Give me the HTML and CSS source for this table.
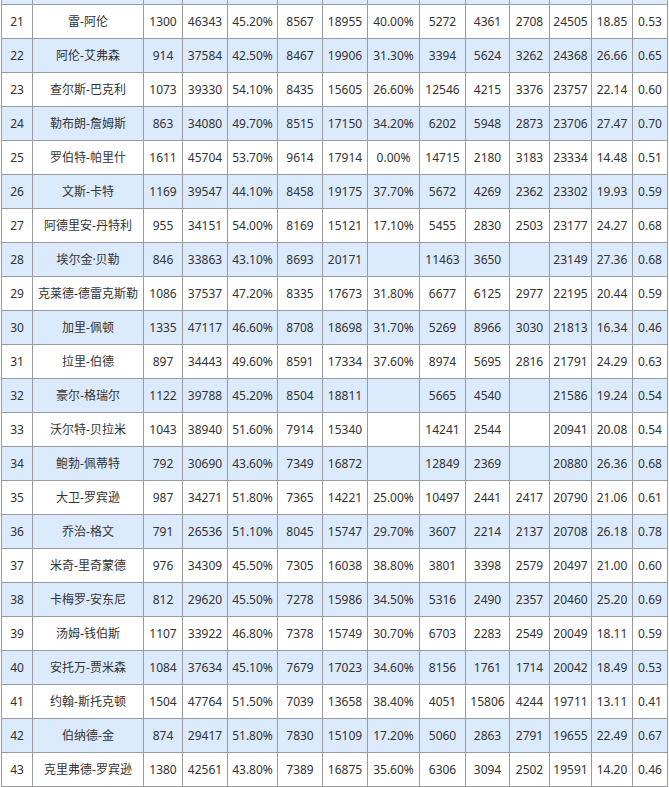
FILE: index.html
```html
<!DOCTYPE html>
<html lang="zh-CN">
<head>
<meta charset="utf-8">
<title>NBA 历史得分榜</title>
<link rel="stylesheet" href="styles.css">
</head>
<body>
<table class="stats">
<colgroup>
<col class="c-rank"><col class="c-name"><col class="c-g"><col class="c-min"><col class="c-fg"><col class="c-fgm"><col class="c-fga"><col class="c-3p"><col class="c-ft"><col class="c-ast"><col class="c-stl"><col class="c-pts"><col class="c-ppg"><col class="c-ppm">
</colgroup>
<tbody>
<tr class="stub alt"><td></td><td></td><td></td><td></td><td></td><td></td><td></td><td></td><td></td><td></td><td></td><td></td><td></td><td></td></tr>
<tr><td>21</td><td>雷-阿伦</td><td>1300</td><td>46343</td><td>45.20%</td><td>8567</td><td>18955</td><td>40.00%</td><td>5272</td><td>4361</td><td>2708</td><td>24505</td><td>18.85</td><td>0.53</td></tr>
<tr class="alt"><td>22</td><td>阿伦-艾弗森</td><td>914</td><td>37584</td><td>42.50%</td><td>8467</td><td>19906</td><td>31.30%</td><td>3394</td><td>5624</td><td>3262</td><td>24368</td><td>26.66</td><td>0.65</td></tr>
<tr><td>23</td><td>查尔斯-巴克利</td><td>1073</td><td>39330</td><td>54.10%</td><td>8435</td><td>15605</td><td>26.60%</td><td>12546</td><td>4215</td><td>3376</td><td>23757</td><td>22.14</td><td>0.60</td></tr>
<tr class="alt"><td>24</td><td>勒布朗-詹姆斯</td><td>863</td><td>34080</td><td>49.70%</td><td>8515</td><td>17150</td><td>34.20%</td><td>6202</td><td>5948</td><td>2873</td><td>23706</td><td>27.47</td><td>0.70</td></tr>
<tr><td>25</td><td>罗伯特-帕里什</td><td>1611</td><td>45704</td><td>53.70%</td><td>9614</td><td>17914</td><td>0.00%</td><td>14715</td><td>2180</td><td>3183</td><td>23334</td><td>14.48</td><td>0.51</td></tr>
<tr class="alt"><td>26</td><td>文斯-卡特</td><td>1169</td><td>39547</td><td>44.10%</td><td>8458</td><td>19175</td><td>37.70%</td><td>5672</td><td>4269</td><td>2362</td><td>23302</td><td>19.93</td><td>0.59</td></tr>
<tr><td>27</td><td>阿德里安-丹特利</td><td>955</td><td>34151</td><td>54.00%</td><td>8169</td><td>15121</td><td>17.10%</td><td>5455</td><td>2830</td><td>2503</td><td>23177</td><td>24.27</td><td>0.68</td></tr>
<tr class="alt"><td>28</td><td>埃尔金·贝勒</td><td>846</td><td>33863</td><td>43.10%</td><td>8693</td><td>20171</td><td></td><td>11463</td><td>3650</td><td></td><td>23149</td><td>27.36</td><td>0.68</td></tr>
<tr><td>29</td><td>克莱德-德雷克斯勒</td><td>1086</td><td>37537</td><td>47.20%</td><td>8335</td><td>17673</td><td>31.80%</td><td>6677</td><td>6125</td><td>2977</td><td>22195</td><td>20.44</td><td>0.59</td></tr>
<tr class="alt"><td>30</td><td>加里-佩顿</td><td>1335</td><td>47117</td><td>46.60%</td><td>8708</td><td>18698</td><td>31.70%</td><td>5269</td><td>8966</td><td>3030</td><td>21813</td><td>16.34</td><td>0.46</td></tr>
<tr><td>31</td><td>拉里-伯德</td><td>897</td><td>34443</td><td>49.60%</td><td>8591</td><td>17334</td><td>37.60%</td><td>8974</td><td>5695</td><td>2816</td><td>21791</td><td>24.29</td><td>0.63</td></tr>
<tr class="alt"><td>32</td><td>豪尔-格瑞尔</td><td>1122</td><td>39788</td><td>45.20%</td><td>8504</td><td>18811</td><td></td><td>5665</td><td>4540</td><td></td><td>21586</td><td>19.24</td><td>0.54</td></tr>
<tr><td>33</td><td>沃尔特-贝拉米</td><td>1043</td><td>38940</td><td>51.60%</td><td>7914</td><td>15340</td><td></td><td>14241</td><td>2544</td><td></td><td>20941</td><td>20.08</td><td>0.54</td></tr>
<tr class="alt"><td>34</td><td>鲍勃-佩蒂特</td><td>792</td><td>30690</td><td>43.60%</td><td>7349</td><td>16872</td><td></td><td>12849</td><td>2369</td><td></td><td>20880</td><td>26.36</td><td>0.68</td></tr>
<tr><td>35</td><td>大卫-罗宾逊</td><td>987</td><td>34271</td><td>51.80%</td><td>7365</td><td>14221</td><td>25.00%</td><td>10497</td><td>2441</td><td>2417</td><td>20790</td><td>21.06</td><td>0.61</td></tr>
<tr class="alt"><td>36</td><td>乔治-格文</td><td>791</td><td>26536</td><td>51.10%</td><td>8045</td><td>15747</td><td>29.70%</td><td>3607</td><td>2214</td><td>2137</td><td>20708</td><td>26.18</td><td>0.78</td></tr>
<tr><td>37</td><td>米奇-里奇蒙德</td><td>976</td><td>34309</td><td>45.50%</td><td>7305</td><td>16038</td><td>38.80%</td><td>3801</td><td>3398</td><td>2579</td><td>20497</td><td>21.00</td><td>0.60</td></tr>
<tr class="alt"><td>38</td><td>卡梅罗-安东尼</td><td>812</td><td>29620</td><td>45.50%</td><td>7278</td><td>15986</td><td>34.50%</td><td>5316</td><td>2490</td><td>2357</td><td>20460</td><td>25.20</td><td>0.69</td></tr>
<tr><td>39</td><td>汤姆-钱伯斯</td><td>1107</td><td>33922</td><td>46.80%</td><td>7378</td><td>15749</td><td>30.70%</td><td>6703</td><td>2283</td><td>2549</td><td>20049</td><td>18.11</td><td>0.59</td></tr>
<tr class="alt"><td>40</td><td>安托万-贾米森</td><td>1084</td><td>37634</td><td>45.10%</td><td>7679</td><td>17023</td><td>34.60%</td><td>8156</td><td>1761</td><td>1714</td><td>20042</td><td>18.49</td><td>0.53</td></tr>
<tr><td>41</td><td>约翰-斯托克顿</td><td>1504</td><td>47764</td><td>51.50%</td><td>7039</td><td>13658</td><td>38.40%</td><td>4051</td><td>15806</td><td>4244</td><td>19711</td><td>13.11</td><td>0.41</td></tr>
<tr class="alt"><td>42</td><td>伯纳德-金</td><td>874</td><td>29417</td><td>51.80%</td><td>7830</td><td>15109</td><td>17.20%</td><td>5060</td><td>2863</td><td>2791</td><td>19655</td><td>22.49</td><td>0.67</td></tr>
<tr><td>43</td><td>克里弗德-罗宾逊</td><td>1380</td><td>42561</td><td>43.80%</td><td>7389</td><td>16875</td><td>35.60%</td><td>6306</td><td>3094</td><td>2502</td><td>19591</td><td>14.20</td><td>0.46</td></tr>
</tbody>
</table>
</body>
</html>
```

FILE: styles.css
```css
html, body {
  margin: 0;
  padding: 0;
  background: #ffffff;
}

.stats {
  margin-left: 1px;
  border-collapse: separate;
  border-spacing: 0;
  table-layout: fixed;
  width: 667px;
  border-left: 1px solid #9a9a9a;
  font-family: "Noto Sans", "Noto Sans CJK SC", sans-serif;
  font-size: 12px;
  color: #333333;
}

.c-rank { width: 31px; }
.c-name { width: 111px; }
.c-g { width: 39px; }
.c-min { width: 45px; }
.c-fg { width: 50px; }
.c-fgm { width: 45px; }
.c-fga { width: 45px; }
.c-3p { width: 52px; }
.c-ft { width: 46px; }
.c-ast { width: 44px; }
.c-stl { width: 40px; }
.c-pts { width: 42px; }
.c-ppg { width: 41px; }
.c-ppm { width: 35px; }

.stats td {
  height: 33px;
  padding: 0;
  box-sizing: content-box;
  text-align: center;
  vertical-align: middle;
  white-space: nowrap;
  overflow: hidden;
  border-right: 1px solid #9a9a9a;
  border-bottom: 1px solid #9a9a9a;
  line-height: 16px;
}

.stats tr.alt td {
  background: #dbeafc;
}

.stats tr.stub td {
  height: 4px;
}
```
